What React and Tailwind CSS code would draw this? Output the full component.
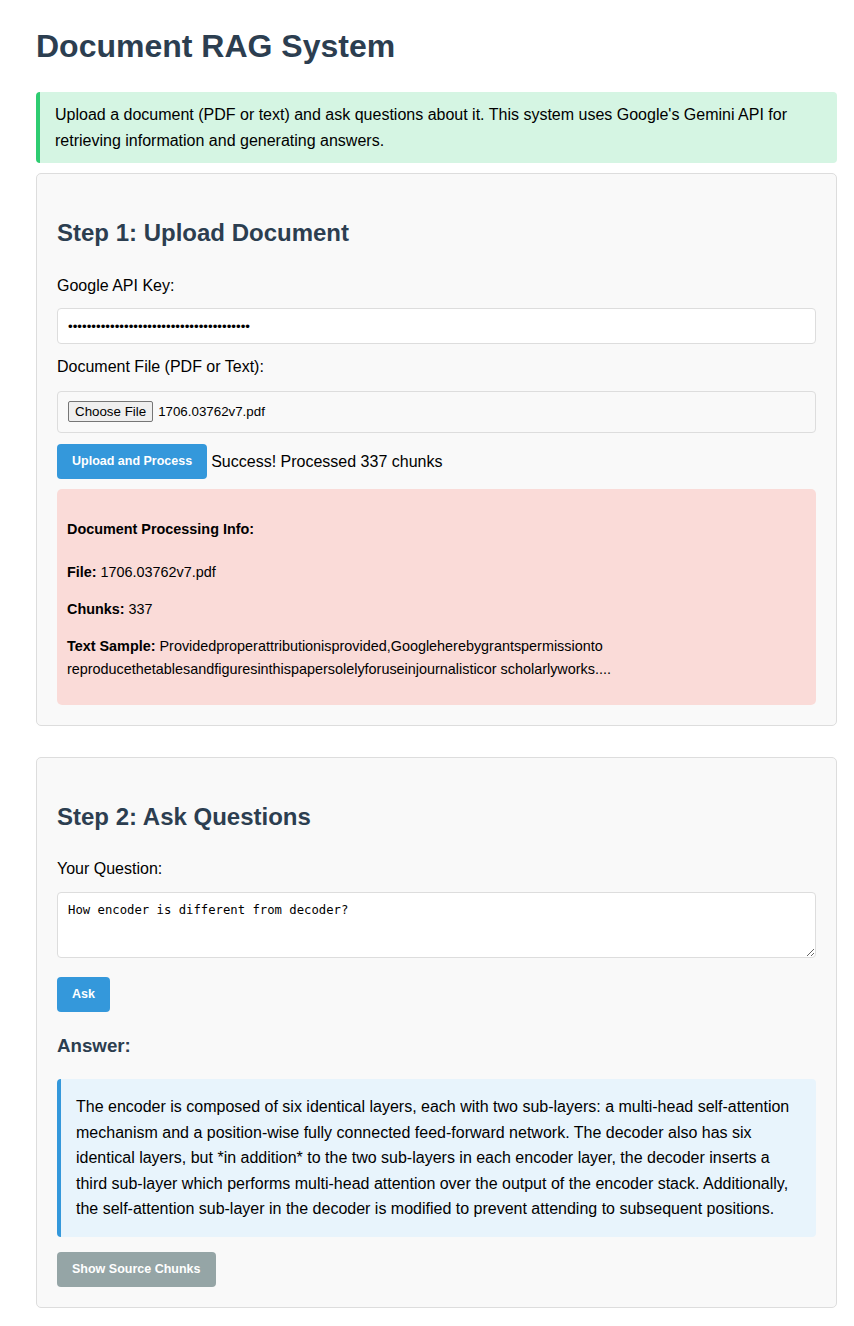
import React from "react";

const font = { fontFamily: '"Liberation Sans", Arial, sans-serif' };

function Btn({ children, gray }) {
  return (
    <button
      type="button"
      className={
        (gray ? "bg-[#95a5a6] " : "bg-[#3498db] ") +
        "text-white font-bold text-[12.5px] leading-[15px] py-[10px] px-[15px] rounded-[4px] shrink-0"
      }
    >
      {children}
    </button>
  );
}

export default function App() {
  return (
    <div className="bg-white text-black min-h-[1326px]" style={font}>
      <div className="ml-[36px] w-[801px] pb-[19px]">
        <h1 className="text-[32px] font-bold leading-[51.2px] text-[#2c3e50] mt-[21px] mb-[20px]">
          Document RAG System
        </h1>

        <div className="bg-[#d5f5e3] border-l-[4px] border-[#2ecc71] rounded-[4px] py-[10px] px-[15px] text-[16px] leading-[25.6px] mb-[10px]">
          Upload a document (PDF or text) and ask questions about it. This system uses Google's Gemini API for retrieving information and generating answers.
        </div>

        {/* Step 1 */}
        <div className="bg-[#f9f9f9] border border-[#dddddd] rounded-[5px] p-[20px]">
          <h2 className="text-[24px] font-bold leading-[38.4px] text-[#2c3e50] mt-[20px] mb-[20px]">
            Step 1: Upload Document
          </h2>
          <div className="text-[16px] leading-[25.6px] mb-[10px]">Google API Key:</div>
          <input
            type="password"
            readOnly
            value={"x".repeat(39)}
            className="block w-full h-[36px] px-[10px] bg-white border border-[#dddddd] rounded-[4px] text-[13.33px] outline-none"
            style={font}
          />
          <div className="text-[16px] leading-[25.6px] mt-[10px] mb-[11px]">Document File (PDF or Text):</div>
          <div className="flex items-center h-[42px] px-[10px] bg-[#f9f9f9] border border-[#dddddd] rounded-[4px] text-[13.33px]">
            <span className="inline-flex items-center h-[21px] px-[6px] bg-[#efefef] border border-[#767676] rounded-[2px] mr-[5px] text-black">
              Choose File
            </span>
            <span>1706.03762v7.pdf</span>
          </div>
          <div className="flex items-center gap-[4px] mt-[11px]">
            <Btn>Upload and Process</Btn>
            <span className="text-[16px] leading-[25.6px]">Success! Processed 337 chunks</span>
          </div>
          <div className="mt-[10px] bg-[#fadbd8] rounded-[5px] p-[10px] text-[14.4px] leading-[23px]">
            <h4 className="font-bold mt-[19px] mb-[20px]">Document Processing Info:</h4>
            <p className="mb-[14px]">
              <strong>File:</strong> 1706.03762v7.pdf
            </p>
            <p className="mb-[14px]">
              <strong>Chunks:</strong> 337
            </p>
            <p className="mb-[14px]">
              <strong>Text Sample:</strong> Providedproperattributionisprovided,Googleherebygrantspermissionto reproducethetablesandfiguresinthispapersolelyforuseinjournalisticor scholarlyworks....
            </p>
          </div>
        </div>

        {/* Step 2 */}
        <div className="mt-[31px] bg-[#f9f9f9] border border-[#dddddd] rounded-[5px] p-[20px]">
          <h2 className="text-[24px] font-bold leading-[38.4px] text-[#2c3e50] mt-[20px] mb-[20px]">
            Step 2: Ask Questions
          </h2>
          <div className="text-[16px] leading-[25.6px] mb-[10px]">Your Question:</div>
          <textarea
            readOnly
            defaultValue="How encoder is different from decoder?"
            className="block w-full h-[66px] p-[10px] bg-white border border-[#dddddd] rounded-[4px] text-[12.25px] leading-[15px] outline-none resize-y"
            style={{ fontFamily: '"DejaVu Sans Mono", monospace' }}
          />
          <div className="mt-[19px] flex">
            <Btn>Ask</Btn>
          </div>
          <h3 className="text-[18.72px] font-bold leading-[30px] text-[#2c3e50] mt-[18.7px] mb-[18.3px]">
            Answer:
          </h3>
          <div className="bg-[#e8f4fc] border-l-[4px] border-[#3498db] rounded-[4px] py-[15px] px-[15px] text-[16px] leading-[25.6px]">
            The encoder is composed of six identical layers, each with two sub-layers: a multi-head self-attention mechanism and a position-wise fully connected feed-forward network. The decoder also has six identical layers, but *in addition* to the two sub-layers in each encoder layer, the decoder inserts a third sub-layer which performs multi-head attention over the output of the encoder stack. Additionally, the self-attention sub-layer in the decoder is modified to prevent attending to subsequent positions.
          </div>
          <div className="mt-[15px] flex">
            <Btn gray>Show Source Chunks</Btn>
          </div>
        </div>
      </div>
    </div>
  );
}
